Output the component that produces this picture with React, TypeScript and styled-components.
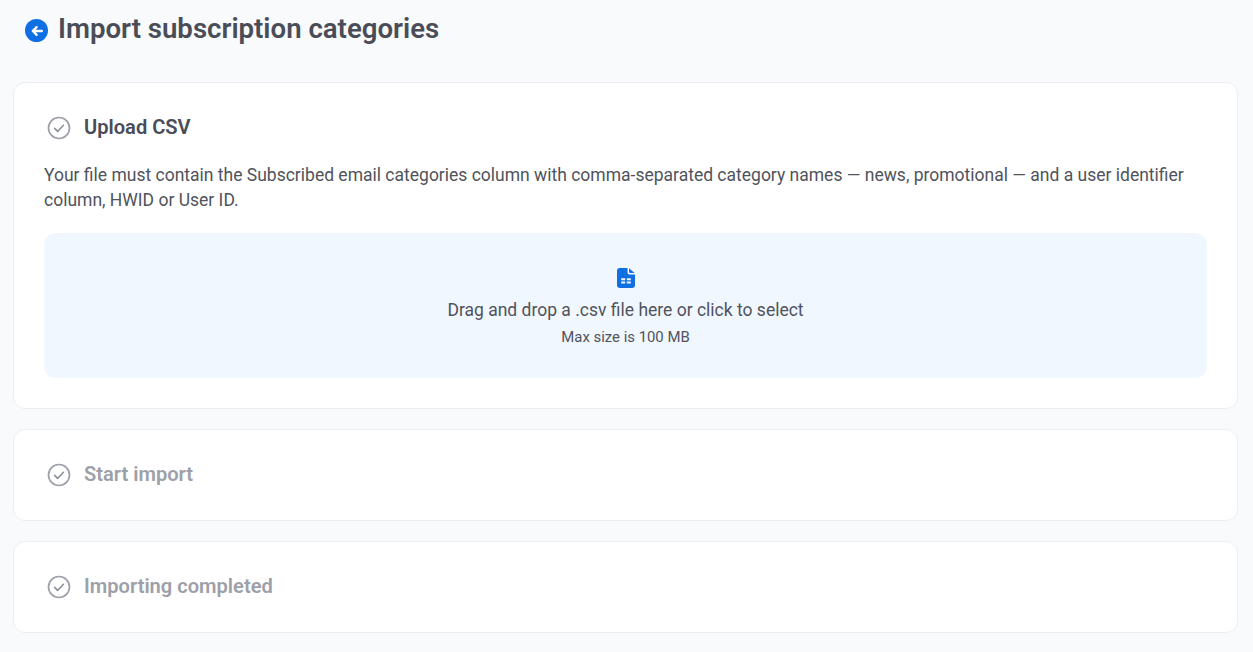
import React from "react";
import styled, { createGlobalStyle } from "styled-components";

const Global = createGlobalStyle`
  html, body { margin: 0; padding: 0; background: #f8fafc; }
  body { font-family: Roboto, "Liberation Sans", sans-serif; color: #50535c; }
  * { box-sizing: border-box; }
`;

const Page = styled.div`
  width: 1253px;
  height: 652px;
  overflow: hidden;
  padding: 0 15px 0 13px;
  display: flex;
  flex-direction: column;
`;

const Header = styled.header`
  height: 82px;
  padding: 11px 0 0 12px;
  display: flex;
  align-items: flex-start;
  gap: 10px;
`;

const BackButton = styled.button`
  width: 23px;
  height: 23px;
  margin-top: 8px;
  padding: 0;
  border: 0;
  border-radius: 50%;
  background: #0f6fe3;
  display: flex;
  align-items: center;
  justify-content: center;
`;

const Title = styled.h1`
  margin: 0;
  font-size: 27.6px;
  line-height: 36px;
  font-weight: 600;
  color: #4a4d57;
`;

const Steps = styled.div`
  display: flex;
  flex-direction: column;
  gap: 20px;
`;

const Card = styled.section`
  background: #fff;
  border: 1px solid #eceef2;
  border-radius: 12px;
  padding: 30px;
`;

const StepHead = styled.div`
  display: flex;
  align-items: center;
  gap: 13px;
  height: 30px;
  padding-left: 3px;
`;

const StepTitle = styled.h2<{ $muted?: boolean }>`
  margin: -2px 0 0;
  font-size: 20.1px;
  line-height: 30px;
  font-weight: 600;
  color: ${(p) => (p.$muted ? "#9da0a9" : "#4a4d57")};
`;

const Description = styled.p`
  margin: 20px 0 0;
  font-size: 17.5px;
  line-height: 25px;
`;

const DropZone = styled.div`
  margin-top: 20px;
  height: 145px;
  border-radius: 12px;
  background: #f1f7ff;
  display: flex;
  flex-direction: column;
  align-items: center;
  padding-top: 35px;
`;

const DropText = styled.div`
  margin-top: 10px;
  font-size: 17.5px;
  line-height: 25px;
`;

const DropHint = styled.div`
  margin-top: 4px;
  font-size: 14.9px;
  line-height: 20px;
`;

const CheckIcon = () => (
  <svg width="24" height="24" viewBox="0 0 24 24" fill="none">
    <circle cx="12" cy="12" r="10.5" stroke="#9da0a9" strokeWidth="1.7" />
    <path d="M7.6 12.4l3 3 5.8-6.2" stroke="#8a8d96" strokeWidth="1.5" strokeLinecap="round" strokeLinejoin="round" />
  </svg>
);

const FileIcon = () => (
  <svg width="18" height="20" viewBox="0 0 18 20">
    <path
      fillRule="evenodd"
      fill="#0f6fe3"
      d="M3 0h7.5v4.5A2 2 0 0 0 12.5 6.5H18V17a3 3 0 0 1-3 3H3a3 3 0 0 1-3-3V3a3 3 0 0 1 3-3zM4.2 10.2v2h4v-2zM9.8 10.2v2h4v-2zM4.2 13.6v2h4v-2zM9.8 13.6v2h4v-2z"
    />
    <path fill="#0f6fe3" d="M12 0.3L17.7 5h-4.2A1.5 1.5 0 0 1 12 3.5z" />
  </svg>
);

export default function App() {
  return (
    <Page>
      <Global />
      <Header>
        <BackButton aria-label="Back">
          <svg width="14" height="14" viewBox="0 0 14 14" fill="none">
            <path d="M11.8 7H3M6.6 3.2L2.8 7l3.8 3.8" stroke="#fff" strokeWidth="2.4" strokeLinecap="round" strokeLinejoin="round" />
          </svg>
        </BackButton>
        <Title>Import subscription categories</Title>
      </Header>
      <Steps>
        <Card>
          <StepHead>
            <CheckIcon />
            <StepTitle>Upload CSV</StepTitle>
          </StepHead>
          <Description>
            Your file must contain the Subscribed email categories column with comma-separated category names — news, promotional — and a user identifier column, HWID or User ID.
          </Description>
          <DropZone>
            <FileIcon />
            <DropText>Drag and drop a .csv file here or click to select</DropText>
            <DropHint>Max size is 100 MB</DropHint>
          </DropZone>
        </Card>
        <Card>
          <StepHead>
            <CheckIcon />
            <StepTitle $muted>Start import</StepTitle>
          </StepHead>
        </Card>
        <Card>
          <StepHead>
            <CheckIcon />
            <StepTitle $muted>Importing completed</StepTitle>
          </StepHead>
        </Card>
      </Steps>
    </Page>
  );
}
